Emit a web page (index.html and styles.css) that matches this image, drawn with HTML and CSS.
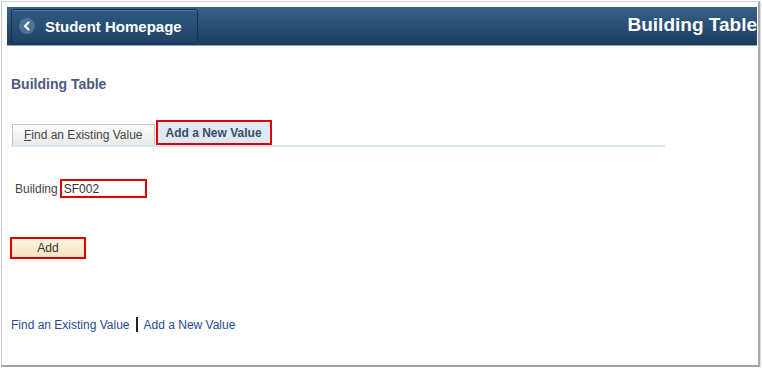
FILE: index.html
```html
<!DOCTYPE html>
<html>
  <head>
    <title>Building Table</title>
    <link rel="stylesheet" href="styles.css">
  </head>
  <body>
    <div class="frame">
      <header class="banner">
        <a class="back-btn" href="#">
          <span class="back-icon">
            <svg width="14" height="14" viewBox="0 0 14 14"><path d="M8.5 3.5 L5 7 L8.5 10.5" fill="none" stroke="#fff" stroke-width="2.2" stroke-linecap="round" stroke-linejoin="round"/></svg>
          </span>
          Student Homepage
        </a>
        <h1 class="page-title">Building Table</h1>
      </header>

      <main class="content">
        <h2 class="section-title">Building Table</h2>

        <div class="tabs">
          <div class="tab"><u>F</u>ind an Existing Value</div>
          <div class="tab active">Add a New Value</div>
        </div>

        <div class="field-row">
          <label>Building</label>
          <div class="input highlight">SF002</div>
        </div>

        <button class="add-btn highlight">Add</button>

        <div class="bottom-links">
          <a href="#">Find an Existing Value</a>
          <span class="sep"></span>
          <a href="#">Add a New Value</a>
        </div>
      </main>
    </div>
  </body>
</html>
```

FILE: styles.css
```css
body {
  margin: 0;
  background-color: #fff;
  font-family: "Liberation Sans", Arial, sans-serif;
}
.frame {
  margin: 1px 0 0 1px;
  width: 750px;
  height: 358px;
  padding: 5px 1px 0 5px;
  border-left: 1px solid #c9c9c9;
  border-top: 1px solid #d6d6d6;
  border-right: 2px solid #a9a9a9;
  border-bottom: 2px solid #a0a0a0;
  box-shadow: 1px 1px 0 #dcdcdc;
  overflow: hidden;
}
.banner {
  height: 38px;
  display: flex;
  align-items: center;
  justify-content: space-between;
  background: linear-gradient(#35628a, #1c3b5c);
  border-bottom: 1px solid #7fa3c8;
  overflow: hidden;
}
.back-btn {
  margin-left: 4px;
  height: 35px;
  width: 187px;
  box-sizing: border-box;
  display: flex;
  align-items: center;
  gap: 10px;
  padding-left: 7px;
  border: 1px solid #17324f;
  border-radius: 3px;
  background: linear-gradient(#305a81, #1f4266);
  box-shadow: inset 0 1px 0 #4b759c;
  color: #fff;
  font-weight: bold;
  font-size: 15px;
  text-decoration: none;
}
.back-icon {
  width: 16px;
  height: 16px;
  border-radius: 50%;
  background-color: #4b7399;
  display: grid;
  place-items: center;
}
.page-title {
  margin: 0 0 2px 0;
  color: #fff;
  font-size: 19px;
  font-weight: bold;
  white-space: nowrap;
}
.content {
  padding: 0 4px;
}
.section-title {
  margin: 30px 0 0;
  font-size: 14px;
  color: #4b5a80;
  font-weight: bold;
}
.tabs {
  margin-top: 28px;
  width: 654px;
  display: flex;
  align-items: flex-end;
  gap: 1px;
  border-bottom: 2px solid #dbe5f2;
}
.tab {
  margin-left: 1px;
  height: 21px;
  padding: 0 11px;
  box-sizing: border-box;
  display: flex;
  align-items: center;
  font-size: 12px;
  color: #444;
  border: 1px solid #c4c4c4;
  border-bottom: none;
  background: linear-gradient(#fdfdfd, #e9e9e9);
}
.tab.active {
  margin-left: 0;
  height: 25px;
  padding: 0 8px;
  font-weight: bold;
  color: #3f4b66;
  background: #dfe8f5;
  border: 2px solid #e10000;
}
.field-row {
  margin-top: 32px;
  display: flex;
  align-items: center;
  gap: 2px;
  font-size: 12px;
  color: #444;
}
.field-row label {
  margin-left: 4px;
}
.input {
  width: 87px;
  height: 19px;
  box-sizing: border-box;
  padding-left: 2px;
  display: flex;
  align-items: center;
  color: #333;
  font-size: 12px;
}
.highlight {
  border: 2px solid #e10000;
}
.add-btn {
  display: block;
  margin-top: 39px;
  margin-left: -1px;
  width: 76px;
  height: 22px;
  padding: 0;
  background: linear-gradient(#fdf3e2, #f7e3c1);
  font-family: "Liberation Sans", Arial, sans-serif;
  font-size: 12px;
  color: #333;
}
.bottom-links {
  margin-top: 58px;
  display: flex;
  align-items: center;
  gap: 6px;
  font-size: 12px;
}
.bottom-links a {
  color: #1f4a94;
  text-decoration: none;
}
.sep {
  width: 2px;
  height: 15px;
  background-color: #222;
}
```
